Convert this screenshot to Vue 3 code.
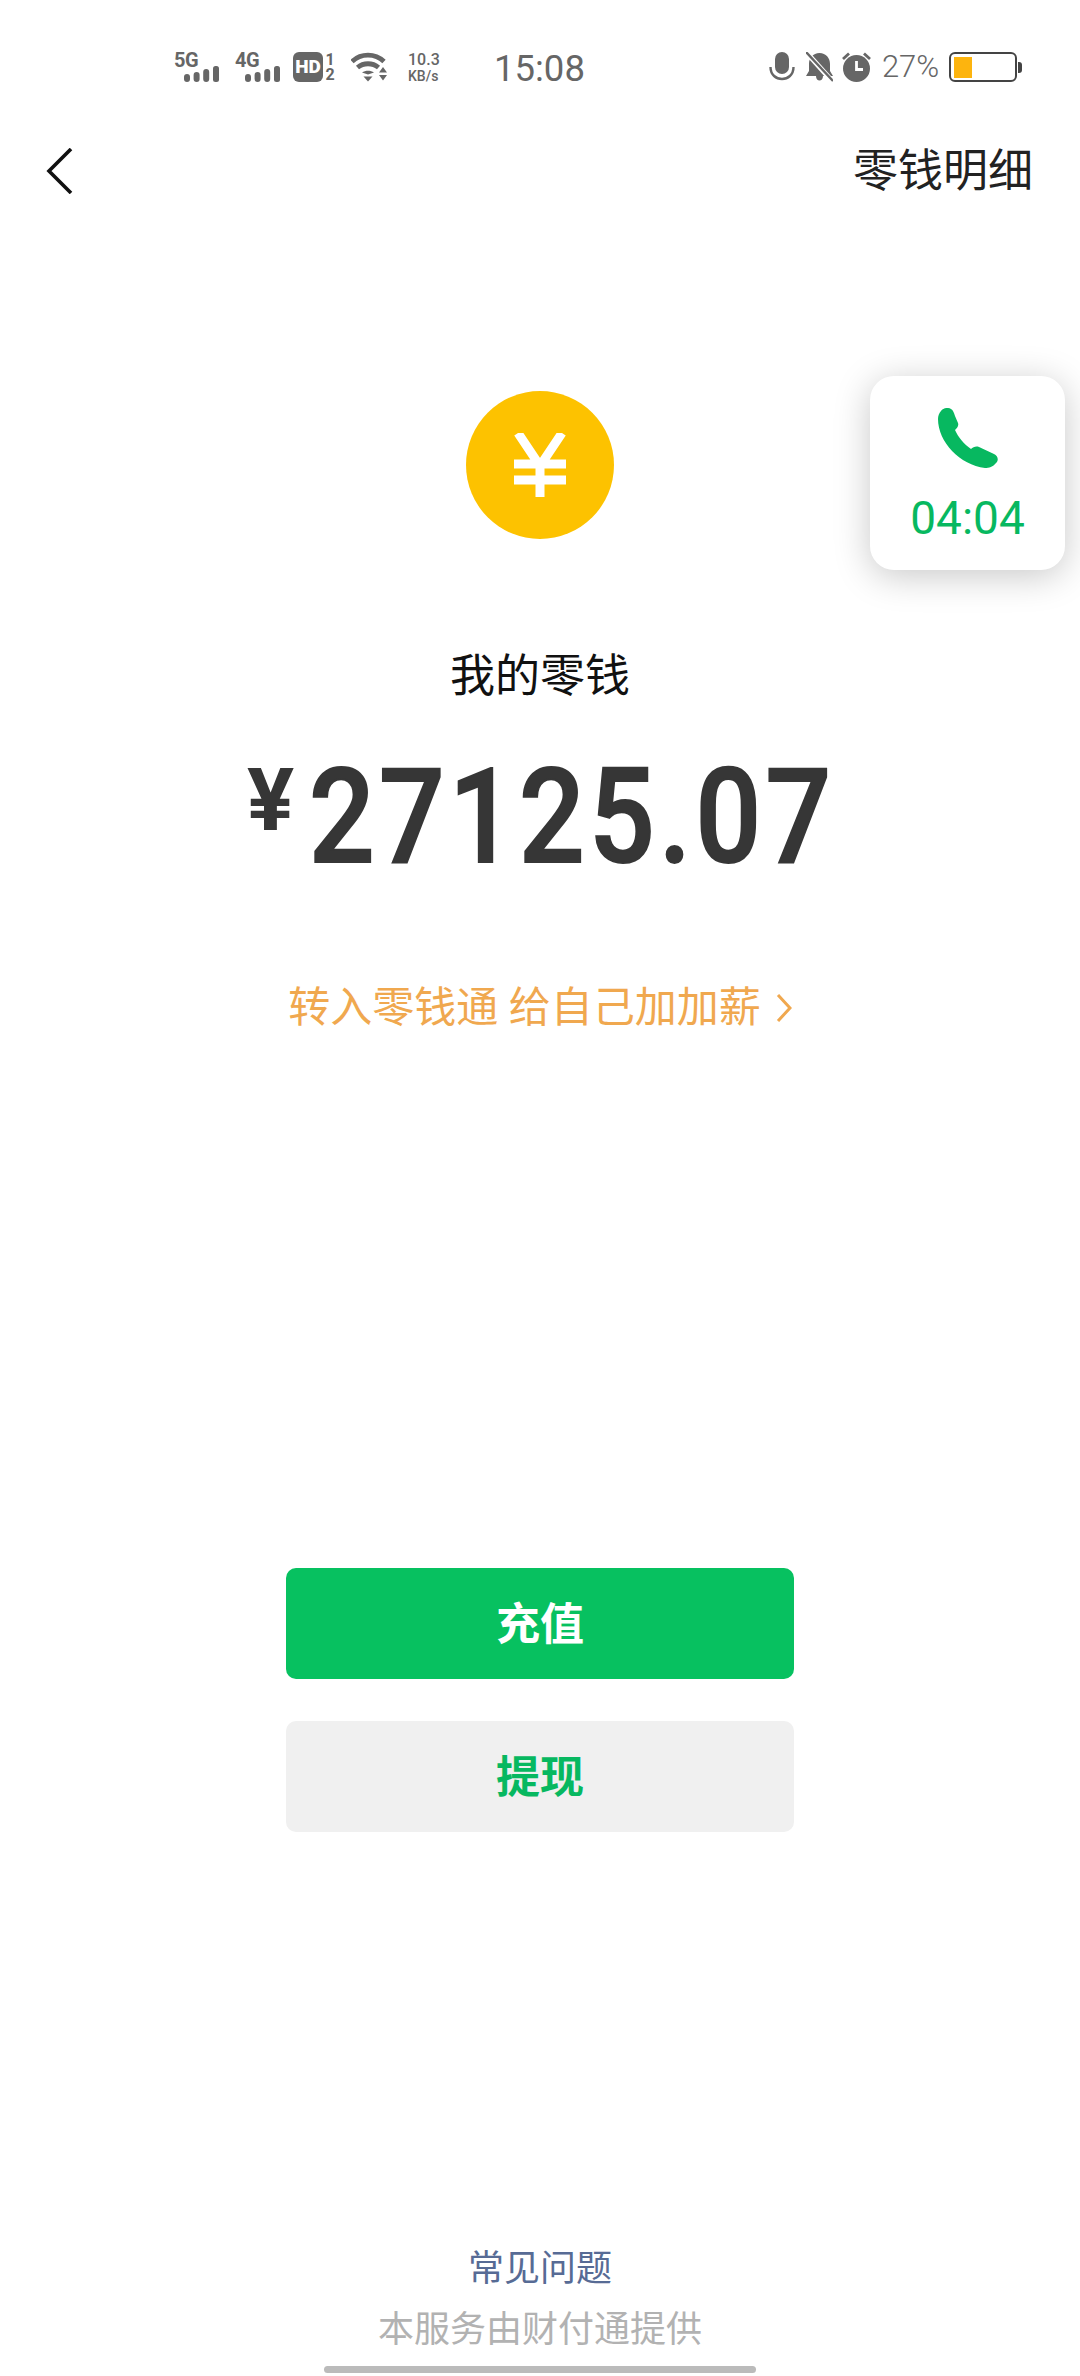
<template>
  <div class="page">
    <header class="status">
      <div class="net">
        <span class="net__name">5G</span>
        <svg class="net__bars" width="35" height="16" viewBox="0 0 35 16">
          <rect x="0" y="8" width="6" height="8" rx="3" />
          <rect x="9.600" y="6" width="6" height="10" rx="3" />
          <rect x="19.200" y="3" width="6" height="13" rx="3" />
          <rect x="29" y="0" width="6" height="16" rx="2.500" />
        </svg>
      </div>
      <div class="net net--second">
        <span class="net__name">4G</span>
        <svg class="net__bars" width="35" height="16" viewBox="0 0 35 16">
          <rect x="0" y="8" width="6" height="8" rx="3" />
          <rect x="9.600" y="6" width="6" height="10" rx="3" />
          <rect x="19.200" y="3" width="6" height="13" rx="3" />
          <rect x="29" y="0" width="6" height="16" rx="2.500" />
        </svg>
      </div>
      <div class="hd">HD</div>
      <div class="sim"><span>1</span><span>2</span></div>
      <svg class="wifi" width="36" height="30" viewBox="0 0 36 30">
        <path d="M1 9.500C10 1 24 1 33 9.500" fill="none" stroke="#666" stroke-width="4.800" />
        <path d="M6.500 15.500C12.500 10.500 21.500 10.500 27.500 15.500" fill="none" stroke="#666" stroke-width="4.800" />
        <path d="M11 20.500C14.500 18 19.500 18 23 20.500L17 22.500Z" fill="#666" />
        <path d="M12.500 24.500H21.500L17 29.500Z" fill="#666" />
        <path d="M32 15L36 20.500H28ZM28 23H36L32 28.500Z" fill="#666" />
      </svg>
      <div class="speed"><span>10.3</span><span class="speed__unit">KB/s</span></div>
      <div class="time">15:08</div>

      <svg class="mic" width="26" height="30" viewBox="0 0 26 30">
        <rect x="6" y="0" width="14" height="22" rx="7" fill="#666" />
        <path d="M1.500 15C1.500 31 24.500 31 24.500 15" fill="none" stroke="#666" stroke-width="2.400" />
      </svg>
      <svg class="bell" width="27" height="30" viewBox="0 0 27 30">
        <path d="M13.500 1C20 1 24 6 24 12V19L27 24H17C17 30 10 30 10 24H0L3 19V12C3 6 7 1 13.500 1Z" fill="#666" />
        <path d="M1 1L26 29" stroke="#fff" stroke-width="5" />
        <path d="M0 0L27 29" stroke="#666" stroke-width="2.400" />
      </svg>
      <svg class="alarm" width="29" height="30" viewBox="0 0 29 30">
        <circle cx="14.500" cy="16.500" r="13.500" fill="#666" />
        <path d="M1 7L7 1.500M28 7L22 1.500" stroke="#666" stroke-width="2.800" />
        <path d="M14.500 9V17.500H21" fill="none" stroke="#fff" stroke-width="2.800" />
      </svg>
      <div class="percent">27%</div>
      <div class="battery">
        <div class="battery__body">
          <div class="battery__level" :style="{ width: batteryFill + 'px' }"></div>
        </div>
        <div class="battery__nub"></div>
      </div>
    </header>

    <nav class="nav">
      <svg class="nav__back" width="28" height="46" viewBox="0 0 28 46">
        <path d="M25 1L3 23L25 45" fill="none" stroke="#111" stroke-width="3.600" />
      </svg>
      <div class="nav__title">零钱明细</div>
    </nav>

    <main class="wallet">
      <div class="coin">
        <svg width="54" height="64" viewBox="0 0 54 64">
          <path d="M5 0L27 33L49 0M27 31V64M1 31H53M1 47H53" fill="none" stroke="#fff" stroke-width="9" />
        </svg>
      </div>
      <div class="wallet__label">我的零钱</div>
      <div class="amount">
        <span class="amount__sign">¥</span>
        <span class="amount__value">{{ balance }}</span>
      </div>
      <div class="promo">
        <span>转入零钱通 给自己加加薪</span>
        <svg width="16" height="28" viewBox="0 0 16 28">
          <path d="M2 1L14 14L2 27" fill="none" stroke="#f0a84f" stroke-width="3" />
        </svg>
      </div>
      <div class="actions">
        <button class="btn btn--primary">充值</button>
        <button class="btn btn--plain">提现</button>
      </div>
    </main>

    <footer class="foot">
      <div class="foot__link">常见问题</div>
      <div class="foot__note">本服务由财付通提供</div>
      <div class="foot__bar"></div>
    </footer>

    <div class="call">
      <svg width="60" height="60" viewBox="0 0 60 60">
        <path d="M3 3C5 0 10 -1 13 1C15 2 16 5 17 8L20 15C21 18 19 20 17 22C20 29 26 36 33 41C35 39 38 38 41 39L56 46C60 48 61 52 58 55C55 59 51 60 47 60C22 57 0 34 0 11C0 8 1 5 3 3Z" fill="#07b860" />
      </svg>
      <div class="call__time">04:04</div>
    </div>
  </div>
</template>

<script setup>
const balance = "27125.07";
const batteryFill = 18;
</script>

<style>
body {
  background: #fff;
}
</style>

<style scoped>
* {
  box-sizing: border-box;
}

.page {
  position: relative;
  display: flex;
  flex-direction: column;
  width: 1080px;
  height: 2376px;
  overflow: hidden;
  background: #fff;
  font-family: Roboto, "Noto Sans CJK SC", sans-serif;
}

.status {
  display: flex;
  align-items: flex-start;
  height: 124px;
  padding: 52px 0 0 174px;
  color: #666;
}

.net {
  position: relative;
  width: 45px;
  height: 30px;
}

.net--second {
  margin-left: 16px;
}

.net__name {
  display: block;
  font-size: 20px;
  font-weight: 700;
  line-height: 16px;
  letter-spacing: -0.5px;
}

.net__bars {
  position: absolute;
  right: 0;
  bottom: 0;
  fill: #666;
}

.hd {
  width: 30px;
  height: 30px;
  margin-left: 13px;
  border-radius: 6px;
  background: #666;
  color: #fff;
  font-size: 19px;
  font-weight: 900;
  line-height: 30px;
  text-align: center;
}

.sim {
  display: flex;
  flex-direction: column;
  align-items: center;
  width: 12px;
  margin-left: 1px;
  font-size: 16px;
  font-weight: 700;
  line-height: 15px;
}

.wifi {
  margin-left: 15px;
}

.speed {
  display: flex;
  flex-direction: column;
  width: 36px;
  margin-left: 21px;
  font-size: 16px;
  font-weight: 500;
  line-height: 16px;
  white-space: nowrap;
}

.speed__unit {
  font-size: 14px;
}

.time {
  margin-top: 2px;
  margin-left: 50px;
  font-size: 36.500px;
  line-height: 30px;
}

.mic {
  margin-left: 184px;
}

.bell {
  margin-left: 11px;
}

.alarm {
  margin-left: 9px;
}

.percent {
  margin-left: 11px;
  font-size: 31px;
  font-weight: 300;
  line-height: 30px;
}

.battery {
  display: flex;
  align-items: center;
  margin-left: 10px;
}

.battery__body {
  width: 68px;
  height: 30px;
  padding: 2.500px;
  border: 2px solid #444;
  border-radius: 6px;
}

.battery__level {
  height: 100%;
  background: #fdb40e;
}

.battery__nub {
  width: 4px;
  height: 11px;
  margin-left: 1px;
  border-radius: 0 3px 3px 0;
  background: #444;
}

.nav {
  display: flex;
  align-items: center;
  justify-content: space-between;
  height: 94px;
  padding: 0 47px 0 46px;
}

.nav__title {
  padding-top: 2px;
  color: #222;
  font-size: 45px;
  line-height: 60px;
}

.wallet {
  display: flex;
  flex-direction: column;
  align-items: center;
}

.coin {
  display: flex;
  align-items: center;
  justify-content: center;
  width: 148px;
  height: 148px;
  margin-top: 173px;
  border-radius: 50%;
  background: #fdc200;
}

.wallet__label {
  margin-top: 108px;
  color: #111;
  font-size: 45px;
  line-height: 60px;
}

.amount {
  display: flex;
  align-items: flex-start;
  width: 100%;
  height: 130px;
  margin-top: 45px;
  padding-left: 247px;
  color: #363636;
}

.amount__sign {
  width: 62px;
  margin-top: 3px;
  font-size: 88px;
  font-weight: 700;
  line-height: 90px;
}

/* roboto is wider than the din-like face in the reference */
.amount__value {
  font-size: 132px;
  font-weight: 500;
  line-height: 130px;
  letter-spacing: 5px;
  white-space: nowrap;
  transform: scaleX(0.875);
  transform-origin: left center;
  -webkit-text-stroke: 2px #363636;
}

.promo {
  display: flex;
  align-items: center;
  gap: 15px;
  margin-top: 96px;
  color: #f0a84f;
  font-size: 42px;
  line-height: 60px;
}

.actions {
  display: flex;
  flex-direction: column;
  gap: 42px;
  margin-top: 530px;
}

.btn {
  width: 508px;
  height: 111px;
  padding-bottom: 6px;
  border: none;
  border-radius: 10px;
  font-family: inherit;
  font-size: 44px;
  font-weight: 700;
}

.btn--primary {
  background: #07c160;
  color: #fff;
}

.btn--plain {
  background: #f0f0f0;
  color: #07b860;
}

.foot {
  display: flex;
  flex-direction: column;
  align-items: center;
  margin-top: auto;
  padding-bottom: 3px;
}

.foot__link {
  color: #576b95;
  font-size: 36px;
  line-height: 50px;
}

.foot__note {
  margin-top: 11px;
  color: #b2b2b2;
  font-size: 36px;
  line-height: 50px;
}

.foot__bar {
  width: 432px;
  height: 7px;
  margin-top: 11px;
  border-radius: 4px;
  background: #bbb;
}

.call {
  position: absolute;
  top: 376px;
  left: 870px;
  display: flex;
  flex-direction: column;
  align-items: center;
  width: 195px;
  height: 194px;
  padding-top: 32px;
  border-radius: 24px;
  background: #fff;
  box-shadow: 0 6px 36px rgba(0, 0, 0, 0.22);
}

.call__time {
  margin-top: 20px;
  color: #07b860;
  font-size: 46px;
  font-weight: 400;
  line-height: 60px;
}
</style>
